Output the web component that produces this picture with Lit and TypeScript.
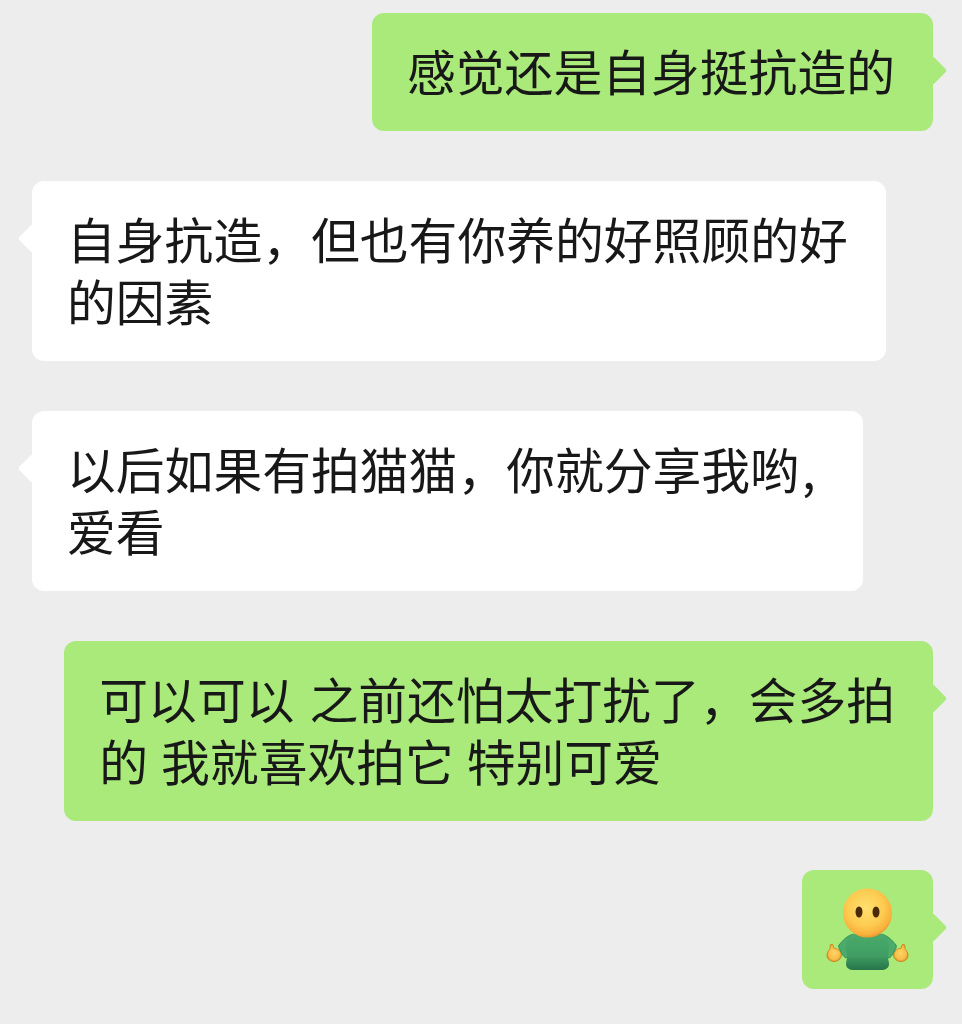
import { LitElement, css, html, svg } from "lit";
import { customElement } from "lit/decorators.js";

type Msg = { side: "me" | "them"; lines: unknown[] };

const messages: Msg[] = [
  { side: "me", lines: ["感觉还是自身挺抗造的"] },
  { side: "them", lines: ["自身抗造，但也有你养的好照顾的好", "的因素"] },
  { side: "them", lines: [html`以后如果有拍猫猫，你就分享我哟<span class="comma">,</span>`, "爱看"] },
  { side: "me", lines: ["可以可以 之前还怕太打扰了，会多拍", "的 我就喜欢拍它 特别可爱"] },
];

// 小人表情：黄脸 + 绿衣服，摊手
const shrugEmoji = svg`
  <defs>
    <radialGradient id="face" cx="0.46" cy="0.4" r="0.62">
      <stop offset="0" stop-color="#ffe070"/>
      <stop offset="0.6" stop-color="#fdcb50"/>
      <stop offset="0.88" stop-color="#f8b03c"/>
      <stop offset="1" stop-color="#e88e26"/>
    </radialGradient>
    <linearGradient id="shirt" x1="0" y1="0" x2="0" y2="1">
      <stop offset="0" stop-color="#4aab6b"/>
      <stop offset="0.6" stop-color="#3f9d63"/>
      <stop offset="1" stop-color="#277548"/>
    </linearGradient>
    <radialGradient id="hand" cx="0.5" cy="0.5" r="0.55">
      <stop offset="0" stop-color="#fdd466"/>
      <stop offset="0.7" stop-color="#f8bd48"/>
      <stop offset="1" stop-color="#dc8a24"/>
    </radialGradient>
  </defs>
  <path d="M1 67.500c0-3 1.500-5 3-6.500l.2-3.500c.2-1.500 2.600-1.600 3 0l.6 2.700c3.500.2 7.700 3 7.700 6.800 0 3.800-4 6.500-7.500 6.500-3.500 0-7-2.500-7-6z" fill="url(#hand)" stroke="#c87a1c" stroke-width="0.800"/>
  <path d="M82 67.500c0-3-1.500-5-3-6.500l-.2-3.500c-.2-1.500-2.600-1.600-3 0l-.6 2.700c-3.500.2-7.700 3-7.700 6.800 0 3.800 4 6.500 7.500 6.500 3.500 0 7-2.500 7-6z" fill="url(#hand)" stroke="#c87a1c" stroke-width="0.800"/>
  <path d="M28 46c-6 1-11 6-15 11-1 1.500 0 3 1 5 1.500 3 3 6 5 7.500 1.500 1 3-.5 4-2.500 1-2 1-5 1-8z" fill="#4aab6b" stroke="#2a8150" stroke-width="0.800"/>
  <path d="M55 46c6 1 11 6 15 11 1 1.500 0 3-1 5-1.500 3-3 6-5 7.500-1.500 1-3-.5-4-2.500-1-2-1-5-1-8z" fill="#4aab6b" stroke="#2a8150" stroke-width="0.800"/>
  <path d="M27 46h29c4 2 7 6.500 7 12 0 4-1 7-1 11 0 2.500 1 4.500 1 7 0 4-3.500 6-8 6H28c-4.500 0-8-2-8-6 0-2.500 1-4.500 1-7 0-4-1-7-1-11 0-5.500 3-10 7-12z" fill="url(#shirt)"/>
  <circle cx="41.500" cy="25" r="24.500" fill="url(#face)"/>
  <ellipse cx="33" cy="24" rx="3.500" ry="5.500" fill="#4a2a08"/>
  <ellipse cx="50" cy="24" rx="3.500" ry="5.500" fill="#4a2a08"/>
`;

@customElement("app-root")
export class AppRoot extends LitElement {
  render() {
    return html`
      ${messages.map(
        (m) => html`
          <div class="bubble ${m.side}">
            ${m.lines.map((l) => html`<div class="line">${l}</div>`)}
          </div>
        `,
      )}
      <div class="bubble me sticker">
        <svg viewBox="0 0 84 84" width="84" height="84" aria-hidden="true">${shrugEmoji}</svg>
      </div>
    `;
  }

  static styles = css`
    :host {
      display: flex;
      flex-direction: column;
      gap: 50px;
      box-sizing: border-box;
      width: 962px;
      height: 1024px;
      padding: 13px 29px 0 32px;
      background: #ededed;
      font-family: "Noto Sans CJK SC", "Liberation Sans", sans-serif;
      font-size: 48.8px;
      line-height: 62px;
      word-spacing: 4px;
      color: #181818;
      overflow: hidden;
    }
    .bubble {
      position: relative;
      padding: 26px 38px 30px 35px;
      border-radius: 12px;
    }
    .line {
      white-space: pre;
    }
    .line + .line {
      word-spacing: 2px;
    }
    .comma {
      padding: 0 9px 0 3px;
    }
    .bubble::after {
      content: "";
      position: absolute;
      top: 47px;
      width: 21px;
      height: 21px;
      border-radius: 3px;
      transform: rotate(45deg);
    }
    .me {
      align-self: flex-end;
      background: #a9ea7a;
    }
    .me::after {
      right: -10px;
      background: #a9ea7a;
    }
    .them {
      align-self: flex-start;
      background: #ffffff;
    }
    .them::after {
      left: -10px;
      background: #ffffff;
    }
    .sticker {
      display: flex;
      margin-top: -1px;
      padding: 18px 23.5px 17px;
    }
    svg {
      display: block;
    }
  `;
}
